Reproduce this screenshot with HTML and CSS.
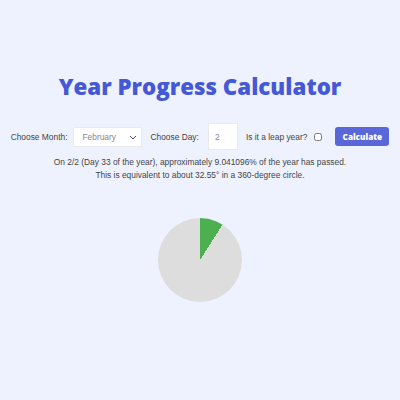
FILE: index.html
```html
<!DOCTYPE html>
<html lang="en">
<head>
  <meta charset="UTF-8">
  <meta name="viewport" content="width=device-width, initial-scale=1.0">
  <title>Year Progress Calculator</title>
  <link rel="stylesheet" href="styles.css">
</head>
<body>
  <main>
    <h1>Year Progress Calculator</h1>
    <div class="controls">
      <label for="month">Choose Month:</label>
      <span class="select-wrap">
        <select id="month">
          <option>January</option>
          <option selected>February</option>
          <option>March</option>
        </select>
        <svg class="chevron" viewBox="0 0 8 5" width="8" height="5"><path d="M1 1l3 3 3-3" fill="none" stroke="#555" stroke-width="1"/></svg>
      </span>
      <label for="day">Choose Day:</label>
      <input type="number" id="day" value="2" min="1" max="31">
      <label for="leap">Is it a leap year?</label>
      <input type="checkbox" id="leap">
      <button id="calc">Calculate</button>
    </div>
    <div class="result">
      <p>On 2/2 (Day 33 of the year), approximately 9.041096% of the year has passed.</p>
      <p>This is equivalent to about 32.55° in a 360-degree circle.</p>
    </div>
    <div class="pie" style="--deg: 32.55deg"></div>
  </main>
</body>
</html>
```

FILE: styles.css
```css
body {
  margin: 0;
  background-color: #eef2ff;
  font-family: 'Liberation Sans', Arial, sans-serif;
  color: #333;
}
main {
  padding-top: 72px;
  display: flex;
  flex-direction: column;
  align-items: center;
}
h1 {
  margin: 0;
  font-family: 'Open Sans', sans-serif;
  font-weight: 800;
  font-size: 22.3px;
  line-height: 30px;
  color: #4558d6;
}
.controls {
  margin-top: 21px;
  display: flex;
  align-items: center;
  font-size: 8.4px;
  color: #444;
}
.controls label {
  margin-right: 6px;
}
/* select with a thin chevron drawn on top */
.select-wrap {
  position: relative;
  margin-right: 8px;
}
select {
  display: block;
  width: 69px;
  height: 20px;
  padding: 0 4px 0 8px;
  border: 1px solid #e8eaf0;
  border-radius: 2px;
  background: white;
  font-family: inherit;
  font-size: 8.4px;
  color: #888;
  appearance: none;
  -webkit-appearance: none;
}
.chevron {
  position: absolute;
  right: 5px;
  top: 8px;
  pointer-events: none;
}
input[type="number"] {
  width: 30px;
  height: 27px;
  box-sizing: border-box;
  margin: 0 8px 0 3px;
  padding: 0 6px;
  border: 1px solid #e8eaf0;
  background: white;
  font-family: inherit;
  font-size: 8.4px;
  color: #888;
  -moz-appearance: textfield;
}
input[type="number"]::-webkit-inner-spin-button,
input[type="number"]::-webkit-outer-spin-button {
  -webkit-appearance: none;
}
input[type="checkbox"] {
  width: 8px;
  height: 8px;
  margin: 0 13px 0 1px;
}
button {
  width: 54px;
  height: 19px;
  padding: 0;
  border: none;
  border-radius: 3px;
  background-color: #5a67d8;
  color: white;
  font-family: 'Open Sans', sans-serif;
  font-weight: 800;
  font-size: 8.2px;
  cursor: pointer;
}
.result {
  margin-top: 6px;
  text-align: center;
  font-size: 8.4px;
  line-height: 13px;
  color: #444;
}
.result p {
  margin: 0;
}
.pie {
  margin-top: 36px;
  width: 84px;
  height: 84px;
  border-radius: 50%;
  background: conic-gradient(#4caf50 0 var(--deg), #dddddd var(--deg) 360deg);
}
```
